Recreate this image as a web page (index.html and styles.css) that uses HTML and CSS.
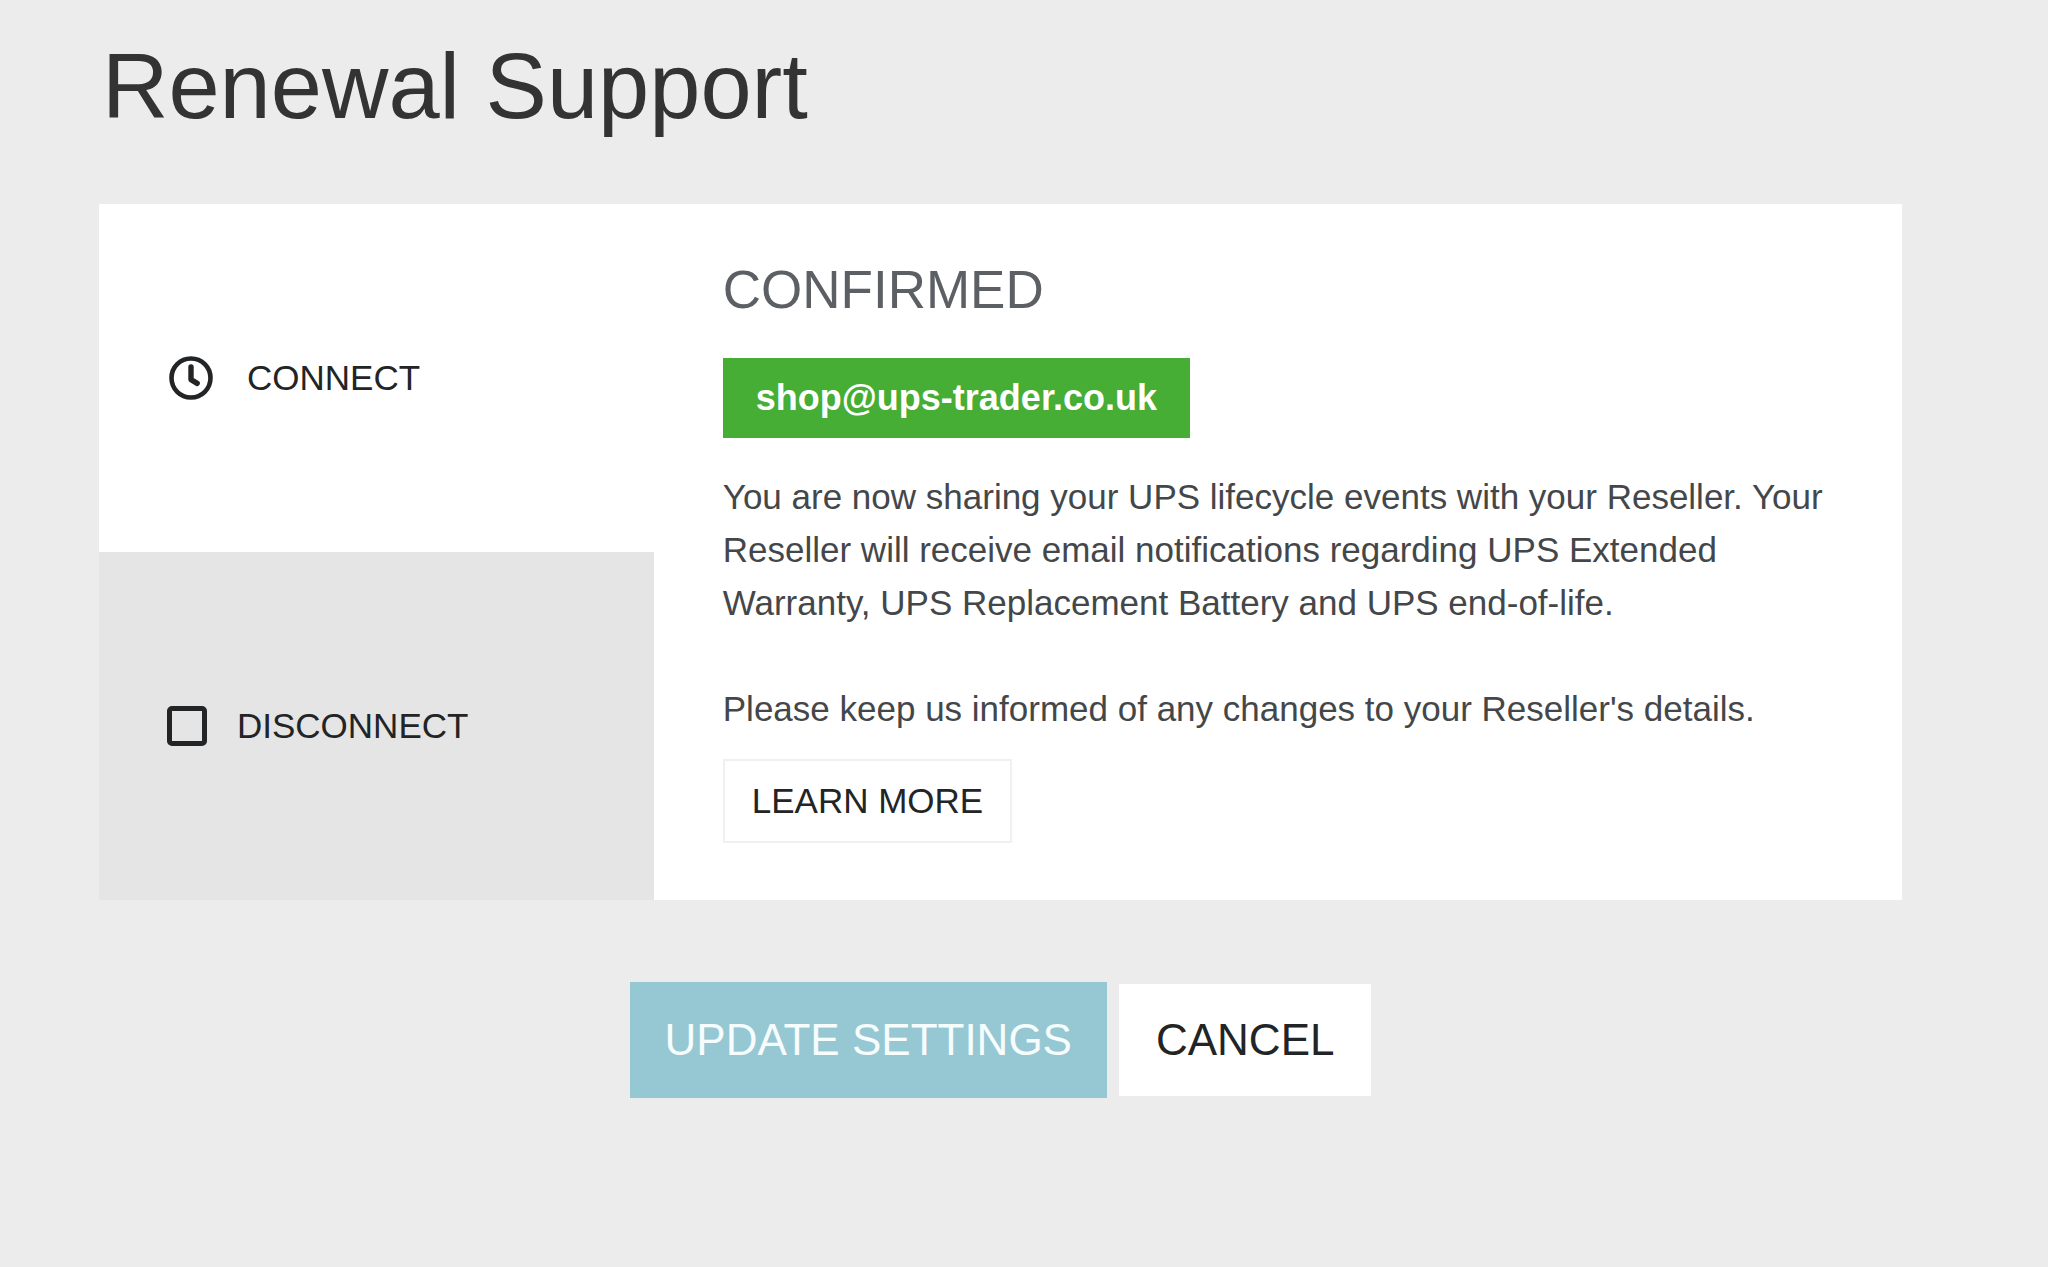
FILE: index.html
```html
<!DOCTYPE html>
<html lang="en">
<head>
  <meta charset="utf-8">
  <meta name="viewport" content="width=device-width, initial-scale=1">
  <title>Renewal Support</title>
  <link rel="stylesheet" href="styles.css">
</head>
<body>
  <main class="page">
    <h1 class="page-title">Renewal Support</h1>

    <form class="settings">
      <div class="card">
        <div class="options">
          <button type="button" class="option option-active">
            <svg class="icon-clock" viewBox="0 0 50 46" aria-hidden="true">
              <circle cx="24" cy="23" r="19.5" fill="none" stroke="currentColor" stroke-width="4.6"/>
              <path d="M24 12V24.6L30.2 28.4" fill="none" stroke="currentColor" stroke-width="5.4" stroke-linecap="round" stroke-linejoin="round"/>
            </svg>
            <span>CONNECT</span>
          </button>
          <label class="option" for="disconnect">
            <input class="option-box" type="checkbox" id="disconnect" name="disconnect">
            <span>DISCONNECT</span>
          </label>
        </div>

        <section class="details">
          <h2 class="status">CONFIRMED</h2>
          <span class="email">shop@ups-trader.co.uk</span>
          <p class="message">You are now sharing your UPS lifecycle events with your Reseller. Your Reseller will receive email notifications regarding UPS Extended Warranty, UPS Replacement Battery and UPS end-of-life.</p>
          <p class="message">Please keep us informed of any changes to your Reseller's details.</p>
          <button type="button" class="learn-more">LEARN MORE</button>
        </section>
      </div>

      <div class="actions">
        <button type="submit" class="action action-primary">UPDATE SETTINGS</button>
        <button type="button" class="action action-secondary">CANCEL</button>
      </div>
    </form>
  </main>
</body>
</html>
```
FILE: styles.css
```css
* {
  box-sizing: border-box;
}

body {
  margin: 0;
  background: #ececec;
  color: #222426;
  font-family: "Liberation Sans", Arial, Helvetica, sans-serif;
  font-size: 35px;
}

button {
  font: inherit;
  color: inherit;
  cursor: pointer;
}

.page {
  padding: 32px 146px 64px 99px;
}

.page-title {
  margin: 0;
  padding: 0 3px 64px;
  color: #333;
  font-size: 92px;
  font-weight: 400;
  line-height: 108px;
}

.card {
  display: grid;
  grid-template-columns: 4fr 9fr;
  background: #fff;
}

.options {
  display: grid;
  grid-template-rows: 1fr 1fr;
}

.option {
  display: flex;
  align-items: center;
  gap: 30px;
  min-height: 348px;
  padding: 0 68px;
  border: 0;
  background: #e5e5e5;
  line-height: 44px;
  cursor: pointer;
}

.option-active {
  background: #fff;
}

.icon-clock {
  flex: none;
  width: 50px;
  height: 46px;
}

.option-box {
  flex: none;
  appearance: none;
  width: 40px;
  height: 40px;
  margin: 0;
  border: 5px solid #222426;
  border-radius: 5px;
}

.details {
  display: flex;
  flex-direction: column;
  align-items: flex-start;
  padding: 56px 69px;
}

.status {
  margin: 0 0 38px;
  color: #5c6065;
  font-size: 53px;
  font-weight: 400;
  line-height: 60px;
}

.email {
  margin-bottom: 32px;
  padding: 18px 33px;
  background: #46ad35;
  color: #fff;
  font-size: 36px;
  font-weight: 700;
  line-height: 44px;
}

.message {
  margin: 0 0 53px;
  color: #44474a;
  line-height: 53px;
}

.message:last-of-type {
  margin-bottom: 24px;
}

.learn-more {
  padding: 18px 27px;
  border: 2px solid #f0f0f0;
  background: #fff;
  line-height: 44px;
}

.actions {
  display: flex;
  justify-content: center;
  align-items: center;
  gap: 12px;
  padding-top: 82px;
}

.action {
  padding: 30px 37px;
  border: 0;
  font-size: 44px;
  line-height: 52px;
}

.action-primary {
  padding: 32px 35px;
  background: #95c8d3;
  color: #f7fcfd;
}

.action-secondary {
  background: #fff;
}
```
